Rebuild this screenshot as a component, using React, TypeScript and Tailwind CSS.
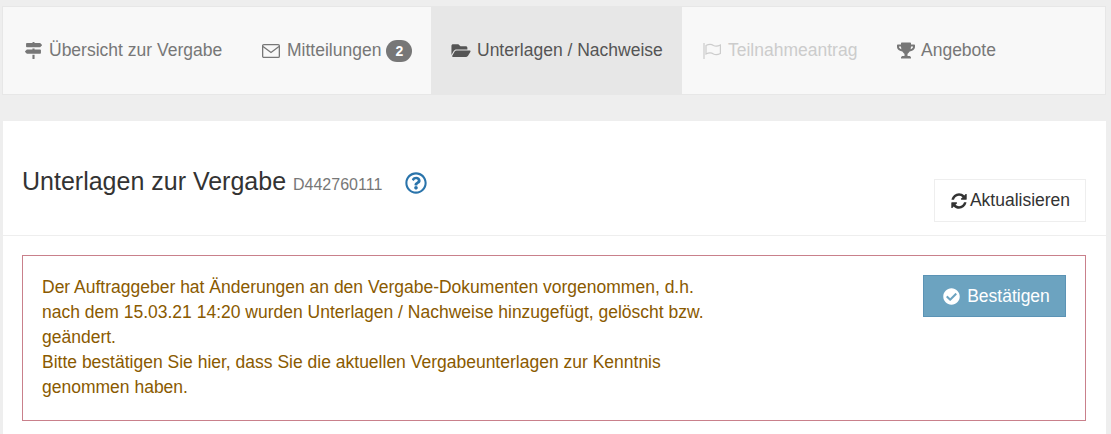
import {
  FaCheckCircle,
  FaFolderOpen,
  FaMapSigns,
  FaRegQuestionCircle,
  FaTrophy,
} from "react-icons/fa";

// fa-refresh from Font Awesome 4, the package only has the newer sync icon
const RefreshIcon = () => (
  <svg viewBox="0 0 1792 1792" className="mr-[2px] h-[18px] w-[18px]" fill="currentColor">
    <path d="M1639 1056q0 5-1 7-64 268-268 434.5t-478 166.5q-146 0-282.5-55t-243.5-157l-129 129q-19 19-45 19t-45-19-19-45v-448q0-26 19-45t45-19h448q26 0 45 19t19 45-19 45l-137 137q71 66 161 102t187 36q134 0 250-65t186-179q11-17 53-117 8-23 30-23h192q13 0 22.5 9.5t9.5 22.5zm25-800v448q0 26-19 45t-45 19h-448q-26 0-45-19t-19-45 19-45l138-138q-148-137-349-137-134 0-250 65t-186 179q-11 17-53 117-8 23-30 23h-199q-13 0-22.5-9.5t-9.5-22.5v-7q65-268 270-434.5t480-166.5q146 0 284 55.5t245 156.5l130-129q19-19 45-19t45 19 19 45z" />
  </svg>
);

const EnvelopeIcon = () => (
  <svg viewBox="0 0 18 14" className="mr-[7px] h-[14px] w-[18px]" fill="none" stroke="currentColor" strokeWidth="1.3">
    <rect x="0.65" y="0.65" width="16.7" height="12.7" rx="1.2" />
    <path d="M1 2.5 L9 8.5 L17 2.5" />
  </svg>
);

const FlagIcon = () => (
  <svg viewBox="0 0 18 16" className="h-[16px] w-[18px]" fill="none" stroke="currentColor" strokeWidth="1.2">
    <path d="M1 0 V16" />
    <path d="M3 2.5 C6 1 9 1.5 10.5 2.5 C12.5 3.5 15 3.2 17.4 2 V10.5 C15 11.7 12.5 12 10.5 11 C9 10 6 9.5 3 11 Z" />
  </svg>
);

const App = () => {
  return (
    <div className="h-[434px] w-[1111px] overflow-hidden bg-[#eeeeee] pl-[2px] pr-[5px] pt-[6px] font-['Liberation_Sans',Arial,sans-serif] text-[17.5px]">
      {/* Tabs */}
      <nav className="flex h-[89px] items-stretch border border-[#e7e7e7] bg-[#f8f8f8] text-[#777777]">
        <a className="flex w-[239px] items-center gap-[7px] pl-[22px]">
          <FaMapSigns className="h-[17px] w-[17px]" />
          <span>Übersicht zur Vergabe</span>
        </a>
        <a className="flex w-[189px] items-center pl-[20px]">
          <EnvelopeIcon />
          <span>Mitteilungen</span>
          <span className="ml-[5px] rounded-[11px] bg-[#777777] px-[9px] py-[4px] text-[14px] font-bold leading-none text-white">
            2
          </span>
        </a>
        <a className="flex w-[251px] items-center gap-[6px] bg-[#e7e7e7] pl-[20px] text-[#555555]">
          <FaFolderOpen className="h-[17px] w-[20px]" />
          <span>Unterlagen / Nachweise</span>
        </a>
        <a className="flex w-[195px] items-center gap-[7px] pl-[21px] text-[#cccccc]">
          <FlagIcon />
          <span>Teilnahmeantrag</span>
        </a>
        <a className="flex items-center gap-[6px] pl-[20px]">
          <FaTrophy className="h-[17px] w-[18px]" />
          <span>Angebote</span>
        </a>
      </nav>

      <main className="ml-px mt-[26px] h-[313px] bg-white">
        {/* Header */}
        <header className="flex h-[115px] items-start justify-between border-b border-[#eeeeee] pl-[19px] pr-[20px]">
          <div className="flex items-center pt-[46px]">
            <h1 className="text-[25px] leading-[28px] text-[#333333]">
              Unterlagen zur Vergabe{" "}
              <small className="text-[16px] text-[#777777]">D442760111</small>
            </h1>
            <FaRegQuestionCircle className="ml-[23px] h-[22px] w-[22px] text-[#2a74ab]" />
          </div>
          <button className="mt-[58px] flex h-[43px] w-[152px] items-center justify-center border border-[#eeeeee] bg-white text-[#333333]">
            <RefreshIcon />
            Aktualisieren
          </button>
        </header>

        {/* Alert */}
        <section className="ml-[19px] mr-[20px] mt-[19px] flex h-[166px] justify-between border border-[#c9808b] pb-[18px] pl-[19px] pr-[19px] pt-[19px]">
          <p className="w-[690px] leading-[25px] text-[#8a5a00]">
            Der Auftraggeber hat Änderungen an den Vergabe-Dokumenten vorgenommen, d.h.
            <br />
            nach dem 15.03.21 14:20 wurden Unterlagen / Nachweise hinzugefügt, gelöscht bzw.
            <br />
            geändert.
            <br />
            Bitte bestätigen Sie hier, dass Sie die aktuellen Vergabeunterlagen zur Kenntnis
            <br />
            genommen haben.
          </p>
          <button className="flex h-[42px] w-[143px] items-center justify-center gap-[7px] border border-[#5b93b5] bg-[#6ca3c0] pl-[4px] text-white">
            <FaCheckCircle className="h-[17px] w-[17px]" />
            Bestätigen
          </button>
        </section>
      </main>
    </div>
  );
};

export default App;
